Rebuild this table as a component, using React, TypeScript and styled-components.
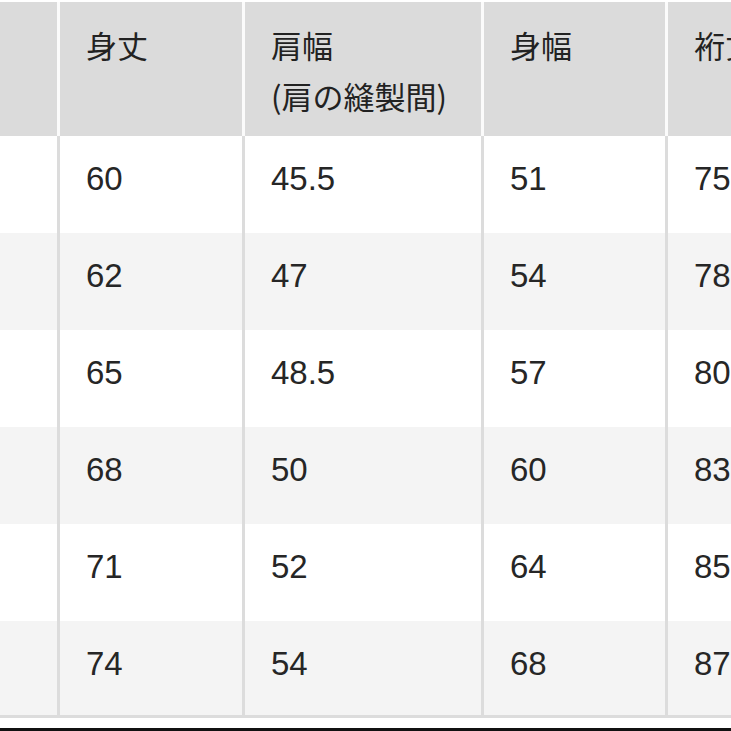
import * as React from 'react';
import styled, { createGlobalStyle } from 'styled-components';

const GlobalStyle = createGlobalStyle`
  html, body {
    margin: 0;
    padding: 0;
    background: #fff;
  }
`;

const Page = styled.div`
  width: 731px;
  height: 731px;
  overflow: hidden;
  background: #fff;
  padding-top: 2px;
  box-sizing: border-box;
  display: flex;
  flex-direction: column;
`;

const Chart = styled.div`
  display: flex;
  flex-direction: column;
  width: 900px;
`;

const COLUMNS = '57px 182px 236px 181px 220px';

const HeadRow = styled.div`
  display: grid;
  grid-template-columns: ${COLUMNS};
  column-gap: 3px;
  background: #fbfbfb;
  height: 134px;
`;

const HeadCell = styled.div`
  background: #dbdbdb;
  padding: 17px 0 0 26px;
  font-family: 'Noto Sans CJK JP', 'Liberation Sans', sans-serif;
  font-size: 31px;
  line-height: 51px;
  color: #222;
  white-space: nowrap;
`;

const Row = styled.div<{ $last?: boolean }>`
  display: grid;
  grid-template-columns: ${COLUMNS};
  column-gap: 3px;
  background: #dcdcdc;
  height: 97px;
  box-sizing: border-box;
  border-bottom: ${(p) => (p.$last ? '3px solid #dcdcdc' : 'none')};
`;

const Cell = styled.div<{ $shade: boolean }>`
  background: ${(p) => (p.$shade ? '#f4f4f4' : '#ffffff')};
  padding: 23px 0 0 26px;
  font-family: 'Liberation Sans', 'Noto Sans CJK JP', sans-serif;
  font-size: 33px;
  line-height: 40px;
  color: #262626;
  white-space: nowrap;
`;

const Footer = styled.div`
  height: 10px;
  background: #fff;
`;

const Rule = styled.div`
  height: 3px;
  background: #111;
`;

const rows = [
  ['60', '45.5', '51', '75.5'],
  ['62', '47', '54', '78'],
  ['65', '48.5', '57', '80'],
  ['68', '50', '60', '83'],
  ['71', '52', '64', '85'],
  ['74', '54', '68', '87.5'],
];

export default function App(): JSX.Element {
  return (
    <>
      <GlobalStyle />
      <Page>
        <Chart>
          <HeadRow>
            <HeadCell />
            <HeadCell>身丈</HeadCell>
            <HeadCell>
              肩幅
              <br />
              (肩の縫製間)
            </HeadCell>
            <HeadCell>身幅</HeadCell>
            <HeadCell>裄丈</HeadCell>
          </HeadRow>
          {rows.map((r, i) => (
            <Row key={i} $last={i === rows.length - 1}>
              <Cell $shade={i % 2 === 1} />
              {r.map((v, j) => (
                <Cell key={j} $shade={i % 2 === 1}>
                  {v}
                </Cell>
              ))}
            </Row>
          ))}
        </Chart>
        <Footer />
        <Rule />
      </Page>
    </>
  );
}
